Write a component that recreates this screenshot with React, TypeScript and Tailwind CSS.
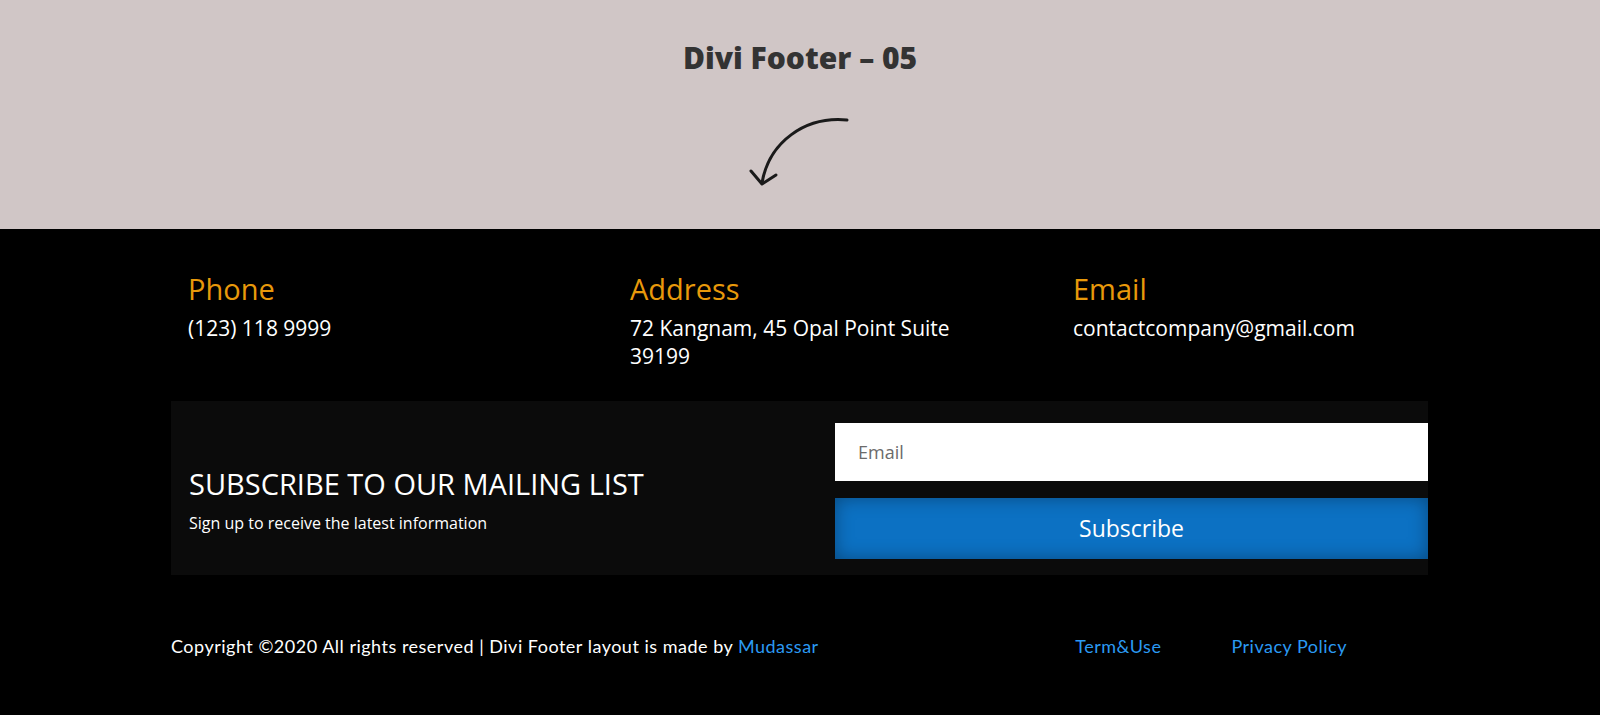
export default function App() {
  const contacts = [
    { title: "Phone", text: "(123) 118 9999" },
    { title: "Address", text: "72 Kangnam, 45 Opal Point Suite 39199" },
    { title: "Email", text: "contactcompany@gmail.com" },
  ];

  return (
    <div className="w-[1600px] min-h-[715px] bg-black font-['Open_Sans',sans-serif]">
      {/* Title band */}
      <section className="h-[229px] bg-[#d0c6c6] flex flex-col items-center pt-[38px]">
        <h1 className="text-[30px] leading-[40px] font-extrabold text-[#333333]">
          Divi Footer – 05
        </h1>
        <svg
          className="mt-[38px] ml-[4px]"
          width="110"
          height="76"
          viewBox="0 0 110 76"
          fill="none"
          stroke="#1a1a1a"
          strokeWidth="3"
          strokeLinecap="round"
          strokeLinejoin="round"
        >
          <path d="M100 4 C 58 0, 22 26, 15 67" />
          <path d="M4 55 L15 68 L29 59" />
        </svg>
      </section>

      {/* Footer */}
      <footer className="w-[1257px] ml-[171px]">
        <div className="grid grid-cols-[442px_443px_1fr] pt-[40px] pb-[31px] pl-[17px]">
          {contacts.map((c) => (
            <div key={c.title} className="max-w-[345px]">
              <h3 className="text-[29px] leading-[40px] text-[#e8990b]">{c.title}</h3>
              <p className="mt-[5px] text-[21px] leading-[28px] text-white">{c.text}</p>
            </div>
          ))}
        </div>

        <div className="h-[174px] bg-[#0b0b0b] flex items-center">
          <div className="flex-1 pl-[18px] pt-[22px]">
            <h2 className="text-[29px] leading-[38px] text-white">
              SUBSCRIBE TO OUR MAILING LIST
            </h2>
            <p className="mt-[10px] text-[16px] leading-[20px] text-white">
              Sign up to receive the latest information
            </p>
          </div>
          <div className="w-[593px] mt-[6px] flex flex-col gap-[17px]">
            <input
              placeholder="Email"
              className="h-[58px] w-full bg-white px-[23px] text-[18px] text-[#666] placeholder:text-[#6b6b6b] outline-none"
            />
            <button className="h-[61px] w-full bg-[#0c71c3] text-[23px] text-white shadow-[inset_0_0_18px_rgba(0,0,0,0.35)]">
              Subscribe
            </button>
          </div>
        </div>

        <div className="flex items-center pt-[59px] font-['Lato',sans-serif] text-[18px] tracking-[0.5px] leading-[24px]">
          <p className="text-white">
            Copyright ©2020 All rights reserved | Divi Footer layout is made by{" "}
            <a className="text-[#2b9af3]">Mudassar</a>
          </p>
          <a className="ml-auto text-[#2b9af3]">Term&amp;Use</a>
          <a className="ml-[70px] mr-[81px] text-[#2b9af3]">Privacy Policy</a>
        </div>
      </footer>
    </div>
  );
}
